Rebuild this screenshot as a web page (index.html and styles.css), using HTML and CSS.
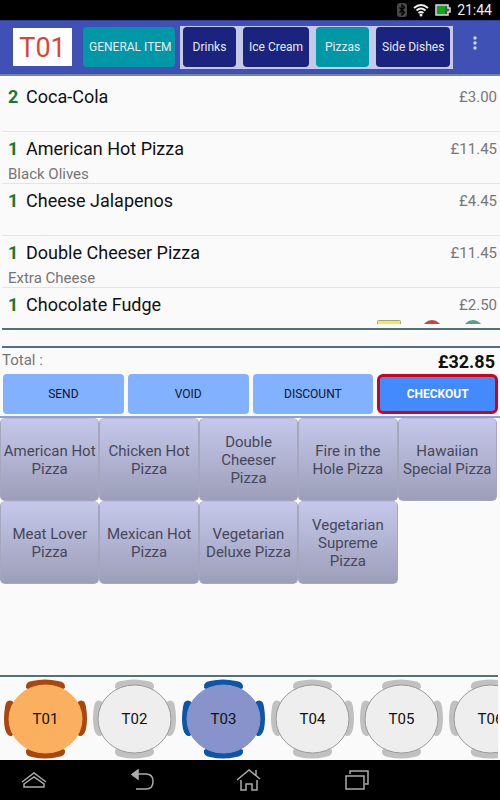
FILE: index.html
```html
<!DOCTYPE html>
<html lang="en">
<head>
<meta charset="utf-8">
<meta name="viewport" content="width=device-width, initial-scale=1">
<title>Order T01</title>
<link rel="stylesheet" href="styles.css">
</head>
<body>
<svg class="defs" aria-hidden="true">
  <symbol id="seat" viewBox="0 0 89 83">
    <g class="chairs">
      <path d="M25 11Q24 5 31 4Q44 1 57 4Q65 5 64 11L60 13Q44 6 29 13Z"/>
      <path d="M25 73Q24 79 31 80Q44 83 57 80Q65 79 64 73L60 71Q44 78 29 71Z"/>
      <path d="M11 24Q5 22 4 30Q2 42 4 52Q6 60 11 59L14 55Q9 41 14 27Z"/>
      <path d="M78 24Q84 22 85 30Q87 42 85 52Q83 60 78 59L75 55Q80 41 75 27Z"/>
    </g>
    <ellipse class="top" cx="44.500" cy="42" rx="36.500" ry="34"/>
  </symbol>
</svg>
<div class="status">
  <svg width="10" height="14" viewBox="0 0 10 14" aria-hidden="true"><rect width="10" height="14" rx="3" fill="#484848"/><path d="M2.500 4.500L7.500 9.500L5 12V2L7.500 4.500L2.500 9.500" fill="none" stroke="#000" stroke-width="1.200"/></svg>
  <svg width="16" height="14" viewBox="0 0 16 14" aria-hidden="true"><g fill="none" stroke="#eee" stroke-width="2"><path d="M1 5Q8-1 15 5"/><path d="M3.500 7.500Q8 3.500 12.500 7.500"/><path d="M5.500 10Q8 8 10.500 10"/></g><circle cx="8" cy="12" r="1.500" fill="#eee"/></svg>
  <svg width="16" height="12" viewBox="0 0 16 12" aria-hidden="true"><path d="M1 1H13V4H15V8H13V11H1Z" fill="#555" stroke="#ddd" stroke-width="1.500"/><rect x="2" y="2" width="8" height="8" fill="#13a51c"/></svg>
  <time>21:44</time>
</div>
<header class="bar">
  <h1 class="current">T01</h1>
  <button class="cat active">GENERAL ITEM</button>
  <nav class="cats" aria-label="Categories">
    <button class="cat">Drinks</button>
    <button class="cat">Ice Cream</button>
    <button class="cat active">Pizzas</button>
    <button class="cat">Side Dishes</button>
  </nav>
  <button class="more" aria-label="More options"><svg width="4" height="14" viewBox="0 0 4 14"><g fill="#d3d8f2"><circle cx="2" cy="2" r="1.700"/><circle cx="2" cy="7" r="1.700"/><circle cx="2" cy="12" r="1.700"/></g></svg></button>
</header>
<main>
  <ul class="order">
    <li><div class="line"><b>2</b><span class="name">Coca-Cola</span><span class="price">£3.00</span></div></li>
    <li><div class="line"><b>1</b><span class="name">American Hot Pizza</span><span class="price">£11.45</span></div><p>Black Olives</p></li>
    <li><div class="line"><b>1</b><span class="name">Cheese Jalapenos</span><span class="price">£4.45</span></div></li>
    <li><div class="line"><b>1</b><span class="name">Double Cheeser Pizza</span><span class="price">£11.45</span></div><p>Extra Cheese</p></li>
    <li><div class="line"><b>1</b><span class="name">Chocolate Fudge</span><span class="price">£2.50</span></div>
      <div class="marks"><svg width="24" height="18" viewBox="0 0 24 18"><rect x=".5" y=".5" width="23" height="17" rx="1" fill="#f5e663" stroke="#aaa576"/></svg><svg width="20" height="20" viewBox="0 0 20 20"><circle cx="10" cy="10" r="10" fill="#c14b38"/></svg><svg width="20" height="20" viewBox="0 0 20 20"><circle cx="10" cy="10" r="10" fill="#55a287"/></svg></div></li>
  </ul>
  <div class="strip"></div>
  <div class="total"><span>Total :</span><strong>£32.85</strong></div>
  <div class="actions">
    <button>SEND</button><button>VOID</button><button>DISCOUNT</button><button class="checkout">CHECKOUT</button>
  </div>
  <section class="items" aria-label="Pizzas">
    <button>American Hot Pizza</button><button>Chicken Hot Pizza</button><button>Double Cheeser Pizza</button><button>Fire in the Hole Pizza</button><button>Hawaiian Special Pizza</button>
    <button>Meat Lover Pizza</button><button>Mexican Hot Pizza</button><button>Vegetarian Deluxe Pizza</button><button>Vegetarian Supreme Pizza</button>
  </section>
</main>
<section class="tables" aria-label="Tables">
  <button class="seat orange"><svg><use href="#seat"/></svg><span>T01</span></button>
  <button class="seat"><svg><use href="#seat"/></svg><span>T02</span></button>
  <button class="seat blue"><svg><use href="#seat"/></svg><span>T03</span></button>
  <button class="seat"><svg><use href="#seat"/></svg><span>T04</span></button>
  <button class="seat"><svg><use href="#seat"/></svg><span>T05</span></button>
  <button class="seat"><svg><use href="#seat"/></svg><span>T06</span></button>
</section>
<nav class="system" aria-label="System">
  <button aria-label="Menu"><svg width="26" height="18" viewBox="0 0 26 18"><path d="M1 11L13 2L25 11M3 13L13 6L23 13V16H3Z"/></svg></button>
  <button aria-label="Back"><svg width="24" height="22" viewBox="0 0 24 22"><path d="M7 5H16Q23 5 23 12.500Q23 20 16 20H6"/><path class="solid" d="M8 1V10L2 5.500Z"/></svg></button>
  <button aria-label="Home"><svg width="26" height="24" viewBox="0 0 26 24"><path d="M1 12L13 2L24 11M20 8V2M5 12V22H10V16H16V22H21V12"/></svg></button>
  <button aria-label="Recent apps"><svg width="24" height="20" viewBox="0 0 24 20"><path d="M1 6H19V19H1ZM5 4V1H23V14H20"/></svg></button>
</nav>
</body>
</html>
```
FILE: styles.css
```css
* { box-sizing: border-box; }
body {
  margin: 0;
  min-height: 100vh;
  display: flex;
  flex-direction: column;
  overflow-x: hidden;
  background: #fafafa;
  color: #111;
  font-family: Roboto, "Liberation Sans", sans-serif;
}
button {
  margin: 0;
  padding: 0;
  border: 0;
  background: none;
  color: inherit;
  font-family: inherit;
}
.defs { position: absolute; width: 0; height: 0; }

.status {
  height: 20px;
  padding-right: 8px;
  display: flex;
  align-items: center;
  justify-content: flex-end;
  gap: 6px;
  background: #000;
  color: #eee;
  font-size: 14px;
}

.bar {
  height: 56px;
  padding: 5px 16px 0 13px;
  display: flex;
  align-items: flex-start;
  background: #3f51b5;
  border-top: 1px solid #303f9f;
  border-bottom: 2px solid #7485a8;
}
.current {
  margin: 2px 11px 0 0;
  width: 59px;
  height: 38px;
  background: #fff;
  color: #db4437;
  font-size: 27px;
  font-weight: 400;
  line-height: 40px;
  text-align: center;
}
.cat {
  height: 40px;
  padding: 0 6px;
  border-radius: 4px;
  background: #1a237e;
  color: #e8eaf6;
  font-size: 12px;
  white-space: nowrap;
}
.bar > .cat { width: 92px; margin: 1px 5px 0 0; }
.cat.active { background: #0097a7; }
.cats {
  height: 43px;
  padding: 1px 3px;
  display: flex;
  gap: 7px;
  background: #c5cae9;
}
.cats .cat { min-width: 53px; }
.more { margin: 10px 7px 0 auto; }

main { flex: 1; }
.order {
  height: 248px;
  margin: 0;
  padding: 4px 0 0;
  overflow: hidden;
  list-style: none;
}
.order li {
  height: 52px;
  margin-left: 2px;
  padding: 6px 3px 0 6px;
  border-bottom: 1px solid #e4e4e4;
}
.line { display: flex; align-items: center; line-height: 22px; }
.line b { width: 18px; color: #1b7a2a; font-size: 18px; }
.name { flex: 1; font-size: 18px; }
.price { color: #777; font-size: 15px; }
.order p { margin: 5px 0 0; color: #757575; font-size: 15px; line-height: 18px; }
.marks { display: flex; justify-content: flex-end; gap: 21px; margin: 4px 14px 0 0; }

.strip {
  height: 20px;
  margin: 4px 0 0 2px;
  border-top: 2px solid #52707f;
  border-bottom: 2px solid #52707f;
}
.total {
  height: 26px;
  padding: 0 5px 0 2px;
  display: flex;
  justify-content: space-between;
  color: #757575;
  font-size: 15px;
  line-height: 24px;
}
.total strong { color: #111; font-size: 18px; line-height: 28px; }
.actions {
  padding: 0 2px 2px 3px;
  display: grid;
  grid-template-columns: repeat(4, 1fr);
  gap: 4px;
  border-bottom: 2px solid #8c9fe0;
}
.actions button {
  height: 40px;
  border-radius: 4px;
  background: #82b1ff;
  color: #0b1530;
  font-size: 12px;
}
.actions .checkout {
  border: 3px solid #d0021b;
  border-radius: 6px;
  background: #448aff;
  color: #fff;
  font-weight: 700;
}
.items {
  margin: 0 3px 0 0;
  display: grid;
  grid-template-columns: repeat(5, 1fr);
  grid-auto-rows: 83px;
}
.items button {
  padding: 0 2px;
  border: 1px solid #a5a7bf;
  border-top-color: #bbbdd8;
  border-radius: 5px;
  background: linear-gradient(#c5c8ea, #9c9eb9);
  color: #46475a;
  font-size: 15px;
  line-height: 18px;
}

.tables {
  height: 85px;
  margin-right: 2px;
  display: flex;
  overflow: hidden;
  border-top: 2px solid #52707f;
}
.seat {
  flex: none;
  width: 89px;
  display: grid;
  font-size: 15px;
  color: #111;
  --chair: #c1c1c1;
  --top: #eee;
  --edge: #999;
}
.seat:first-child { margin-left: 1px; }
.seat svg, .seat span { grid-area: 1 / 1; place-self: center; }
.seat svg { width: 89px; height: 83px; }
.chairs { fill: var(--chair); }
.top { fill: var(--top); stroke: var(--edge); }
.orange { --chair: #a8480f; --top: #fbb05f; --edge: #fbb05f; }
.blue { --chair: #0d56a6; --top: #8793ca; --edge: #8793ca; }

.system {
  height: 40px;
  padding: 0 131px 0 21px;
  display: flex;
  align-items: center;
  justify-content: space-between;
  background: #000;
}
.system svg { display: block; fill: none; stroke: #aaa; stroke-width: 1.500; }
.system .solid { fill: #aaa; }
```
